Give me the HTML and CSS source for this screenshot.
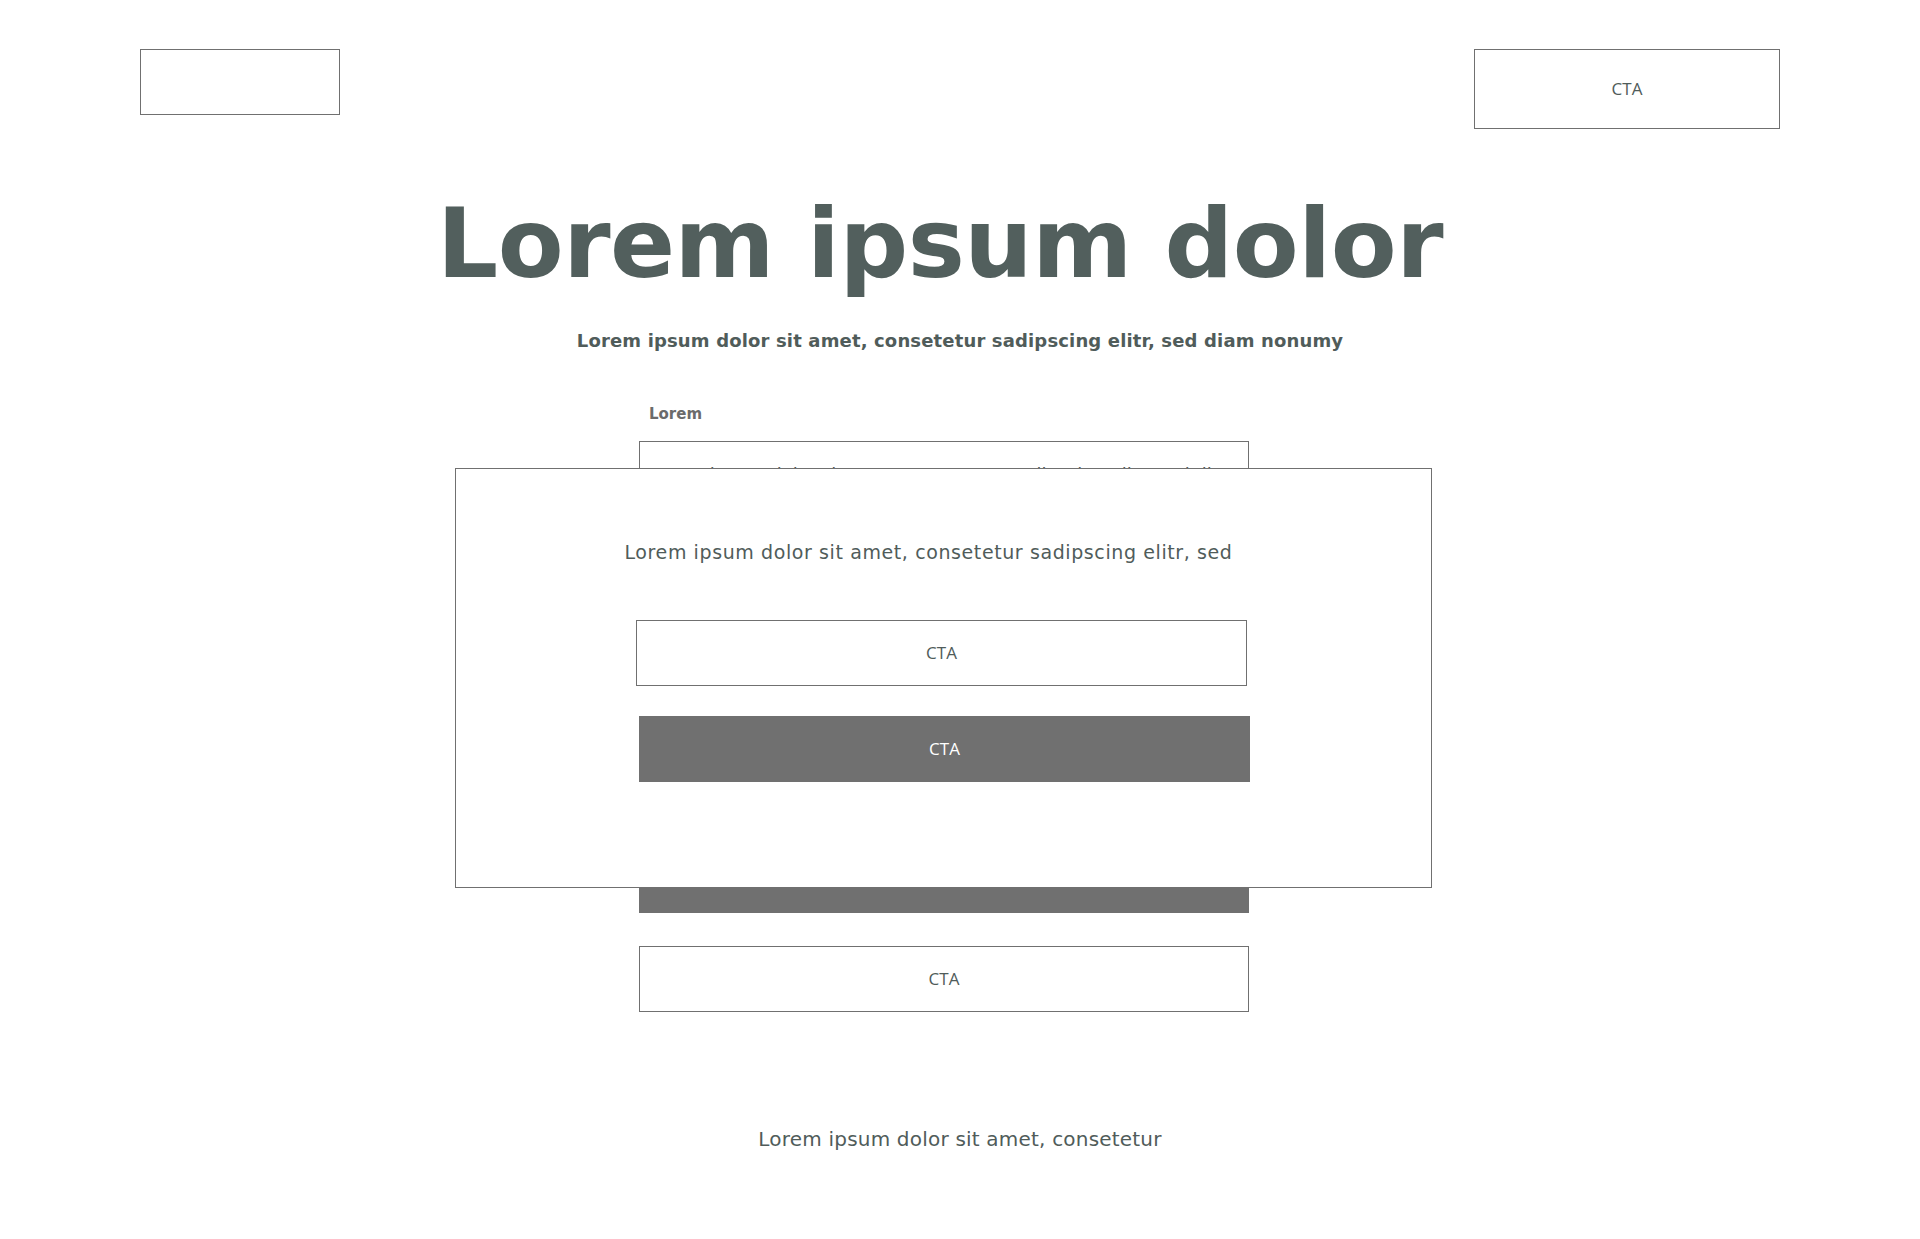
FILE: index.html
```html
<!DOCTYPE html>
<html lang="en">
<head>
<meta charset="utf-8">
<title>Lorem ipsum dolor</title>
<link rel="stylesheet" href="styles.css">
</head>
<body>
<div class="page">
  <header class="header">
    <div class="logo"></div>
    <a class="btn btn-outline btn-header" href="#">CTA</a>
  </header>

  <main class="main">
    <h1 class="title">Lorem ipsum dolor</h1>
    <p class="subtitle">Lorem ipsum dolor sit amet, consetetur sadipscing elitr, sed diam nonumy</p>

    <form class="form">
      <div class="field">
        <label class="label">Lorem</label>
        <div class="input">Lorem ipsum dolor sit amet, consetetur sadipscing elitr, sed diam</div>
      </div>
      <div class="input input-extra"></div>
      <div class="input input-extra"></div>
      <a class="btn btn-filled btn-form" href="#">CTA</a>
      <a class="btn btn-outline btn-form-2" href="#">CTA</a>
    </form>

    <p class="footer-text">Lorem ipsum dolor sit amet, consetetur</p>
  </main>

  <div class="modal">
    <p class="modal-text">Lorem ipsum dolor sit amet, consetetur sadipscing elitr, sed</p>
    <a class="btn btn-outline modal-btn-1" href="#">CTA</a>
    <a class="btn btn-filled modal-btn-2" href="#">CTA</a>
  </div>
</div>
</body>
</html>
```

FILE: styles.css
```css
* { box-sizing: border-box; }

html, body {
  margin: 0;
  padding: 0;
  background: #ffffff;
}

body {
  font-family: "DejaVu Sans", "Open Sans", sans-serif;
  color: #505c5a;
}

.page {
  position: relative;
  width: 1920px;
  min-height: 1239px;
}

.header {
  display: flex;
  justify-content: space-between;
  align-items: flex-start;
  padding: 49px 140px 0 140px;
}

.logo {
  width: 200px;
  height: 66px;
  border: 1px solid #707070;
}

.btn {
  display: flex;
  align-items: center;
  justify-content: center;
  text-decoration: none;
  font-family: "Open Sans", "DejaVu Sans", sans-serif;
  font-size: 17px;
  color: #505c5a;
  height: 66px;
  padding-bottom: 2px;
}

.btn-outline {
  border: 1px solid #707070;
  background: #ffffff;
}

.btn-filled {
  background: #707070;
  color: #ffffff;
}

.btn-header {
  width: 306px;
  height: 80px;
}

.main {
  display: flex;
  flex-direction: column;
  align-items: center;
}

.title {
  margin: 67px 0 0 0;
  padding-right: 40px;
  font-family: "DejaVu Sans", sans-serif;
  font-weight: 700;
  font-size: 96px;
  line-height: 96px;
  letter-spacing: -0.5px;
  color: #525f5d;
}

.subtitle {
  margin: 37px 0 0 0;
  font-family: "DejaVu Sans", sans-serif;
  font-size: 18px;
  line-height: 24px;
  font-weight: 700;
  letter-spacing: 0.15px;
  color: #505c5a;
}

.form {
  align-self: flex-start;
  margin-left: 639px;
  width: 610px;
  display: flex;
  flex-direction: column;
}

.field {
  display: flex;
  flex-direction: column;
  margin-top: 51px;
}

.label {
  padding-left: 10px;
  font-family: "DejaVu Sans", sans-serif;
  font-size: 15px;
  line-height: 20px;
  font-weight: 700;
  color: #6b6b6b;
  margin-bottom: 17px;
}

.input {
  height: 66px;
  border: 1px solid #707070;
  display: flex;
  align-items: center;
  justify-content: center;
  font-size: 18px;
  color: #505c5a;
}

.input-extra {
  margin-top: 68px;
}

.btn-form {
  margin-top: 72px;
  width: 610px;
}

.btn-form-2 {
  margin-top: 33px;
  width: 610px;
}

.footer-text {
  margin: 113px 0 0 0;
  font-family: "DejaVu Sans", sans-serif;
  font-size: 20px;
  line-height: 28px;
  letter-spacing: 0.2px;
  color: #505c5a;
}

/* Overlay dialog */
.modal {
  position: absolute;
  left: 455px;
  top: 468px;
  width: 977px;
  height: 420px;
  border: 1px solid #707070;
  background: #ffffff;
  display: flex;
  flex-direction: column;
  padding-top: 70px;
}

.modal-text {
  margin: 0;
  text-align: center;
  padding-right: 30px;
  font-family: "DejaVu Sans", sans-serif;
  font-size: 19px;
  line-height: 26px;
  letter-spacing: 0.6px;
  color: #505c5a;
}

.modal-btn-1 {
  margin: 55px 0 0 180px;
  width: 611px;
}

.modal-btn-2 {
  margin: 30px 0 0 183px;
  width: 611px;
}
```
